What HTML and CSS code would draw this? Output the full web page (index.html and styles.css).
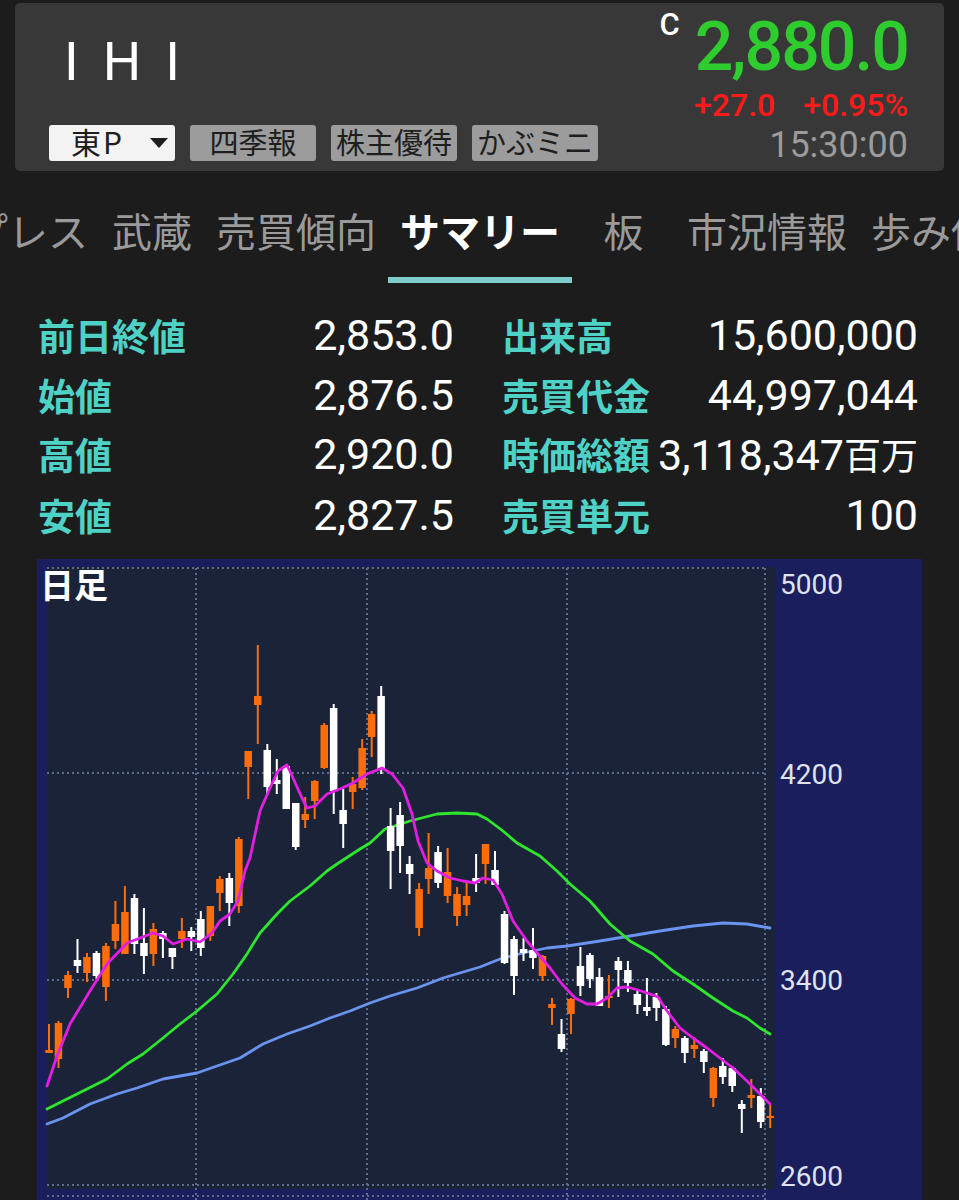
FILE: index.html
```html
<!DOCTYPE html>
<html lang="ja">

<head>
  <meta charset="UTF-8" />
  <meta name="viewport" content="width=device-width, initial-scale=1.0" />
  <title>IHI サマリー</title>
  <link rel="stylesheet" href="styles.css">
</head>

<body>
  <header class="quote-card">
    <div class="stock">
      <div class="stock-name">IHI</div>
      <div class="stock-tags">
        <span class="tag tag-market">東P <i class="caret"></i></span>
        <span class="tag">四季報</span>
        <span class="tag">株主優待</span>
        <span class="tag">かぶミニ</span>
      </div>
    </div>
    <div class="quote">
      <div class="price-row">
        <span class="flag">C</span>
        <span class="price">2,880.0</span>
      </div>
      <div class="change">
        <span>+27.0</span>
        <span>+0.95%</span>
      </div>
      <div class="time">15:30:00</div>
    </div>
  </header>

  <nav class="tabs">
    <div class="tab-strip">
      <span class="tab">プレス</span>
      <span class="tab">武蔵</span>
      <span class="tab">売買傾向</span>
      <span class="tab active">サマリー</span>
      <span class="tab">板</span>
      <span class="tab">市況情報</span>
      <span class="tab">歩み値</span>
    </div>
  </nav>

  <section class="stats">
    <div class="stat"><span class="label">前日終値</span><span class="value">2,853.0</span></div>
    <div class="stat"><span class="label">出来高</span><span class="value">15,600,000</span></div>
    <div class="stat"><span class="label">始値</span><span class="value">2,876.5</span></div>
    <div class="stat"><span class="label">売買代金</span><span class="value">44,997,044</span></div>
    <div class="stat"><span class="label">高値</span><span class="value">2,920.0</span></div>
    <div class="stat"><span class="label">時価総額</span><span class="value">3,118,347<span class="unit">百万</span></span></div>
    <div class="stat"><span class="label">安値</span><span class="value">2,827.5</span></div>
    <div class="stat"><span class="label">売買単元</span><span class="value">100</span></div>
  </section>

  <div class="chart">
    <svg class="chart-svg" width="885" height="642" viewBox="37 558 885 642">
      <rect class="plot" x="47" y="566" width="728" height="622" />
      <g class="grid">
        <line x1="47" y1="567" x2="765" y2="567" />
        <line x1="47" y1="772" x2="765" y2="772" />
        <line x1="47" y1="979" x2="765" y2="979" />
        <line x1="47" y1="1184" x2="765" y2="1184" />
        <line x1="47" y1="1195" x2="765" y2="1195" />
        <line x1="196" y1="567" x2="196" y2="1200" />
        <line x1="367" y1="567" x2="367" y2="1200" />
        <line x1="567" y1="567" x2="567" y2="1200" />
        <line x1="765" y1="567" x2="765" y2="1200" />
      </g>
      <polyline class="ma ma-long" points="47,1123 63,1117 90,1103 117,1093 137,1087 163,1078 197,1072 217,1065 240,1057 263,1043 287,1033 310,1025 330,1017 350,1010 370,1002 390,995 417,987 443,977 480,966 500,958 523,952 547,947 567,945 600,940 630,935 660,930 693,925 723,922 747,923 770,927" />
      <polyline class="ma ma-mid" points="47,1108 63,1100 87,1088 107,1078 127,1063 143,1053 163,1037 180,1023 197,1010 217,993 233,973 247,953 260,932 277,913 290,900 310,885 327,870 337,863 360,848 370,842 385,828 410,820 437,813 457,812 477,813 487,818 503,830 517,842 540,855 557,870 570,883 590,900 610,923 630,940 653,953 673,970 693,983 713,997 733,1010 747,1017 760,1027 770,1033" />
      <g id="candles"></g>
      <polyline class="ma ma-short" points="47,1085 57,1055 70,1023 90,990 107,963 127,942 140,937 153,932 163,935 173,943 187,938 200,941 212,932 220,920 230,913 238,900 245,870 250,857 260,810 270,787 278,770 287,764 293,777 302,797 307,807 315,805 327,793 340,788 353,782 367,773 382,767 392,773 403,787 412,813 418,840 427,862 437,870 450,877 463,880 475,882 483,877 493,879 502,893 513,920 527,940 538,953 550,967 562,983 575,997 587,1003 597,1003 607,997 617,987 627,986 638,989 650,993 658,996 667,1010 680,1027 693,1037 707,1047 720,1057 733,1067 747,1080 760,1093 770,1103" />
      <text class="chart-title" x="40" y="597">日足</text>
      <g class="axis">
        <text x="780" y="593">5000</text>
        <text x="780" y="783">4200</text>
        <text x="780" y="989">3400</text>
        <text x="780" y="1185">2600</text>
      </g>
    </svg>
  </div>

  <script>
    // [high, low, bodyTop, bodyBottom, up]  (chart pixel coords)
    const candles = [
      [1023, 1052, 1049, 1052, 1], [1020, 1067, 1022, 1058, 1], [970, 997, 974, 987, 1], [938, 972, 959, 965, 0],
      [952, 981, 956, 972, 1], [950, 978, 952, 975, 0], [942, 1000, 945, 986, 1], [900, 948, 923, 940, 1],
      [885, 953, 911, 953, 1], [893, 953, 897, 943, 0], [907, 973, 942, 955, 0], [922, 965, 928, 953, 1],
      [930, 957, 932, 938, 0], [947, 968, 947, 956, 0], [917, 947, 930, 938, 1], [926, 950, 930, 936, 0],
      [910, 955, 918, 947, 0], [905, 940, 905, 935, 1], [875, 910, 878, 892, 1], [872, 925, 877, 902, 0],
      [836, 912, 838, 905, 1], [750, 798, 750, 766, 1], [644, 743, 695, 704, 1], [743, 793, 749, 786, 0],
      [758, 793, 779, 783, 0], [763, 808, 765, 808, 0], [802, 849, 802, 846, 0], [796, 827, 813, 819, 1],
      [779, 818, 780, 800, 1], [722, 768, 724, 767, 1], [703, 813, 707, 790, 0], [788, 847, 809, 823, 0],
      [776, 808, 783, 791, 1], [738, 789, 747, 787, 1], [710, 756, 713, 736, 1], [685, 773, 695, 768, 0],
      [807, 888, 825, 850, 0], [801, 872, 814, 845, 0], [855, 893, 863, 873, 0], [882, 935, 888, 927, 1],
      [832, 893, 867, 878, 1], [845, 887, 851, 882, 0], [847, 902, 871, 895, 1], [886, 925, 893, 915, 1],
      [882, 915, 895, 904, 1], [853, 891, 877, 882, 0], [843, 883, 843, 863, 1], [850, 884, 869, 884, 0],
      [910, 963, 913, 962, 0], [935, 994, 938, 975, 0], [937, 960, 948, 952, 0], [927, 968, 949, 957, 0],
      [954, 980, 955, 975, 1], [997, 1024, 1003, 1007, 1], [1018, 1051, 1033, 1048, 0], [997, 1033, 998, 1013, 1],
      [946, 995, 965, 985, 0], [952, 987, 954, 978, 0], [967, 1005, 976, 1005, 0], [974, 1007, 995, 997, 1],
      [956, 996, 960, 969, 0], [960, 991, 969, 982, 0], [988, 1013, 993, 1004, 0], [977, 1015, 1006, 1010, 0],
      [992, 1020, 996, 1007, 0], [1005, 1045, 1008, 1044, 0], [1025, 1047, 1028, 1037, 1], [1035, 1062, 1037, 1052, 0],
      [1036, 1057, 1044, 1048, 1], [1048, 1072, 1050, 1061, 0], [1066, 1106, 1067, 1097, 1], [1057, 1083, 1065, 1076, 0],
      [1065, 1091, 1067, 1085, 0], [1099, 1132, 1103, 1108, 0], [1078, 1107, 1094, 1097, 1], [1087, 1127, 1095, 1121, 0],
      [1103, 1127, 1115, 1117, 1]
    ];

    let out = '';
    candles.forEach(([hi, lo, top, bot, up], i) => {
      const x = 49 + i * 9.49;
      const cls = up ? 'up' : 'down';
      const h = Math.max(bot - top, 2);
      out += `<rect class="${cls}" x="${(x - 1).toFixed(1)}" y="${hi}" width="2" height="${lo - hi}" />`;
      out += `<rect class="${cls}" x="${(x - 3.75).toFixed(1)}" y="${top}" width="7.5" height="${h}" />`;
    });
    document.getElementById('candles').innerHTML = out;
  </script>
</body>

</html>
```

FILE: styles.css
```css
* {
  box-sizing: border-box;
  margin: 0;
  padding: 0;
}

html,
body {
  overflow: hidden;
}

body {
  background: #1c1c1c;
  color: white;
  font-family: Roboto, "Noto Sans CJK JP", sans-serif;
  height: 1200px;
}

/* header card */

.quote-card {
  margin: 3px 15px 0;
  height: 168px;
  background: #383838;
  border-radius: 5px;
  display: flex;
  justify-content: space-between;
  padding: 0 36px 0 34px;
}

.stock {
  display: flex;
  flex-direction: column;
}

.stock-name {
  font-size: 54px;
  line-height: 54px;
  letter-spacing: 24px;
  margin: 32px 0 0 15px;
}

.stock-tags {
  display: flex;
  gap: 15px;
  margin-top: 36px;
}

.tag {
  width: 126px;
  height: 36px;
  background: #9c9c9c;
  color: #1e1e1e;
  border-radius: 3px;
  font-family: "Noto Sans CJK JP", sans-serif;
  font-size: 29px;
  line-height: 32px;
  text-align: center;
}

.tag-market {
  background: #f3f3f3;
  display: flex;
  align-items: center;
  justify-content: space-between;
  padding: 0 7px 4px 22px;
  font-size: 30px;
  letter-spacing: 2px;
}

.caret {
  width: 0;
  height: 0;
  border-left: 9px solid transparent;
  border-right: 9px solid transparent;
  border-top: 10px solid #1e1e1e;
  margin-top: 4px;
}

.quote {
  display: flex;
  flex-direction: column;
  align-items: flex-end;
  padding-top: 10px;
}

.price-row {
  display: flex;
  align-items: flex-start;
}

.flag {
  font-size: 31px;
  line-height: 1;
  font-weight: 500;
  margin: -4px 15px 0 0;
}

.price {
  font-size: 68px;
  line-height: 1;
  font-weight: 500;
  letter-spacing: -2px;
  color: #2ecc2e;
}

.change {
  display: flex;
  gap: 28px;
  margin-top: 8px;
  font-size: 32px;
  line-height: 1;
  font-weight: 500;
  color: #ff1a1a;
}

.time {
  margin-top: 6px;
  font-size: 36px;
  line-height: 1;
  color: #9b9b9b;
}

/* tabs */

.tabs {
  overflow: hidden;
  margin-top: 27px;
  padding-top: 12px;
}

.tab-strip {
  display: flex;
  margin-left: -44px;
}

.tab {
  flex-shrink: 0;
  min-width: 103px;
  padding: 0 12px 27px;
  border-bottom: 6px solid transparent;
  font-family: "Noto Sans CJK JP", sans-serif;
  font-size: 40px;
  line-height: 40px;
  color: #9a9a9a;
  text-align: center;
  white-space: nowrap;
}

.tab.active {
  color: white;
  font-weight: 700;
  border-bottom-color: #7ecccc;
}

/* summary numbers */

.stats {
  display: grid;
  grid-template-columns: 1fr 1fr;
  column-gap: 48px;
  margin-top: 23px;
  padding: 0 41px 0 38px;
}

.stat {
  display: flex;
  justify-content: space-between;
  line-height: 59.5px;
  white-space: nowrap;
}

.label {
  font-family: "Noto Sans CJK JP", sans-serif;
  font-size: 37px;
  font-weight: 700;
  color: #4fd2c6;
}

.value {
  font-size: 43px;
  color: white;
}

.unit {
  font-family: "Noto Sans CJK JP", sans-serif;
  font-size: 37px;
}

/* chart */

.chart {
  margin: 14px 0 0 37px;
  width: 885px;
  height: 642px;
  background: #1a1e5c;
}

.chart-svg {
  display: block;
}

.plot {
  fill: #1b2338;
}

.grid line {
  stroke: #5f6a8c;
  stroke-width: 2;
  stroke-dasharray: 2 3;
}

.ma {
  fill: none;
  stroke-width: 2.8;
  stroke-linejoin: round;
  stroke-linecap: round;
}

.ma-short {
  stroke: #e31ee3;
}

.ma-mid {
  stroke: #2ee62e;
}

.ma-long {
  stroke: #6b93f0;
}

.up {
  fill: #ff6d0a;
}

.down {
  fill: #ffffff;
}

.chart-title {
  font-family: "Noto Sans CJK JP", sans-serif;
  font-size: 34px;
  font-weight: 700;
  fill: white;
}

.axis text {
  font-family: Roboto, sans-serif;
  font-size: 28px;
  fill: #dfe2f0;
}
```
